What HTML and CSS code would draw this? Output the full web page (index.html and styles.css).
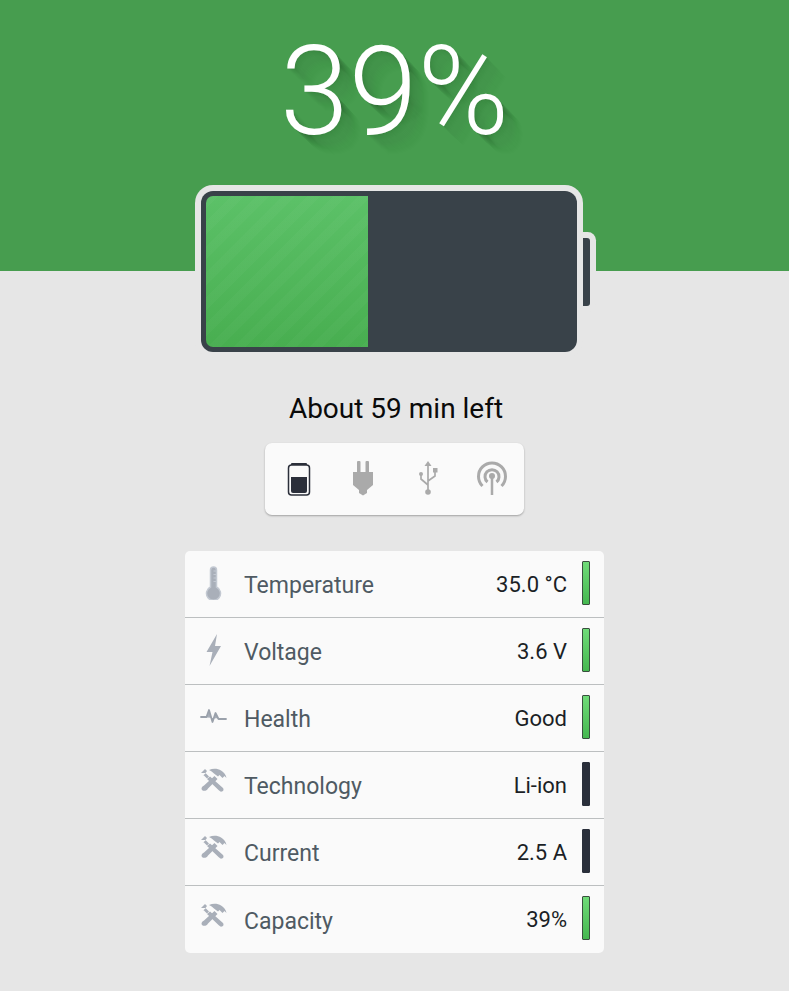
FILE: index.html
```html
<!DOCTYPE html>
<html lang="en">
<head>
  <meta charset="UTF-8" />
  <meta name="viewport" content="width=device-width, initial-scale=1.0" />
  <title>Battery</title>
  <link rel="stylesheet" href="styles.css">
</head>
<body>
  <svg class="defs" width="0" height="0">
    <symbol id="tools" viewBox="0 0 27 24">
      <path d="M1 5 L5 1 L7 3 L5.5 5 L9 8.5 L7 10.5 L3.5 7 L2.5 8 Z M1 5 L2.5 8 L6 5 Z" />
      <path d="M9 2 C13 0 18 0.500 21 2.500 C24 4 26 7 26.500 10 L24.500 8 L22.500 10 L19.500 7 L18 8.500 L14 5.500 C12.500 4 11 3 9 2 Z" />
      <path d="M14.500 8 L17.500 11 L8 20.500 C7 23 3.500 23.500 2 22 C1 21 1.500 18.500 4 17.500 Z" />
      <path d="M7 11 L10 8.500 L23 20 C24 21.500 23.500 23 22 23.500 C20.500 24 19.500 23 18.500 22 Z" />
    </symbol>
  </svg>

  <main class="page">
    <h1 class="percent">39%</h1>

    <div class="battery">
      <div class="battery-body">
        <div class="battery-fill"></div>
      </div>
      <div class="battery-nub"></div>
    </div>

    <p class="time-left">About 59 min left</p>

    <div class="sources">
      <svg class="source" viewBox="0 0 32 36">
        <rect x="8" y="2" width="16" height="3" rx="1" fill="#2b2f3a" />
        <rect x="5.500" y="4" width="21" height="30" rx="3" fill="#fafafa" stroke="#2b2f3a" stroke-width="1.500" />
        <path d="M8 16 H24 V30 a2 2 0 0 1 -2 2 H10 a2 2 0 0 1 -2 -2 Z" fill="#2b2f3a" />
      </svg>
      <svg class="source" viewBox="0 0 32 36" fill="#aaaaaa">
        <rect x="10" y="0" width="3.500" height="12" rx="1" />
        <rect x="18.500" y="0" width="3.500" height="12" rx="1" />
        <path d="M6 11 H26 V24 L20 29 V32 L16 34.500 L12 32 V29 L6 24 Z" />
      </svg>
      <svg class="source" viewBox="0 0 32 36" fill="none" stroke="#aaaaaa" stroke-width="1.700">
        <path d="M16 3 V31 M9 13 V18 L16 24 M23 9 V15 L16 20" />
        <path d="M16 0 L19.500 5 H12.500 Z" fill="#aaaaaa" stroke="none" />
        <circle cx="9" cy="13" r="2" fill="#aaaaaa" stroke="none" />
        <rect x="21" y="7" width="4.500" height="4.500" fill="#aaaaaa" stroke="none" />
        <circle cx="16" cy="31" r="2.800" fill="#aaaaaa" stroke="none" />
      </svg>
      <svg class="source" viewBox="0 0 32 36" fill="none" stroke="#aaaaaa" stroke-width="3">
        <path d="M6.500 25 A13.500 13.500 0 1 1 25.500 25" />
        <path d="M11.500 21 A7 7 0 1 1 20.500 21" />
        <path d="M16 15 V34" stroke-width="2.500" />
        <circle cx="16" cy="15" r="3" fill="#aaaaaa" stroke="none" />
      </svg>
    </div>

    <ul class="stats">
      <li class="stat">
        <svg class="stat-icon" viewBox="0 0 26 34" fill="none" stroke="#c3c9d2" stroke-width="1.500">
          <path d="M10 21 V4 a3 3 0 0 1 6 0 V21 a7 7 0 1 1 -6 0 Z" />
          <path d="M13 5 H16 M13 8.500 H16 M13 12 H16 M13 15.500 H16" stroke-width="1" />
        </svg>
        <span class="stat-label">Temperature</span>
        <span class="stat-value">35.0 °C</span>
        <span class="level ok"></span>
      </li>
      <li class="stat">
        <svg class="stat-icon" viewBox="0 0 26 34" fill="#b1b7c1">
          <path d="M16.500 1 L6 19 H12 L9 33 L20.500 13 H14.500 Z" />
        </svg>
        <span class="stat-label">Voltage</span>
        <span class="stat-value">3.6 V</span>
        <span class="level ok"></span>
      </li>
      <li class="stat">
        <svg class="stat-icon" viewBox="0 0 26 34" fill="none" stroke="#9aa1ab" stroke-width="1.800" stroke-linejoin="round" stroke-linecap="round">
          <path d="M0.500 17 H6 L8.500 10 L12 22 L15 13 L18 19 H25.500" />
        </svg>
        <span class="stat-label">Health</span>
        <span class="stat-value">Good</span>
        <span class="level ok"></span>
      </li>
      <li class="stat">
        <svg class="stat-icon tools-icon"><use href="#tools" /></svg>
        <span class="stat-label">Technology</span>
        <span class="stat-value">Li-ion</span>
        <span class="level off"></span>
      </li>
      <li class="stat">
        <svg class="stat-icon tools-icon"><use href="#tools" /></svg>
        <span class="stat-label">Current</span>
        <span class="stat-value">2.5 A</span>
        <span class="level off"></span>
      </li>
      <li class="stat">
        <svg class="stat-icon tools-icon"><use href="#tools" /></svg>
        <span class="stat-label">Capacity</span>
        <span class="stat-value">39%</span>
        <span class="level ok"></span>
      </li>
    </ul>
  </main>
</body>
</html>
```

FILE: styles.css
```css
* {
  box-sizing: border-box;
}
body {
  margin: 0;
  background-color: #e6e6e6;
  font-family: Roboto, sans-serif;
  color: #1b1f26;
}
.defs {
  display: block;
  height: 0;
}
.page {
  display: flex;
  flex-direction: column;
  align-items: center;
  height: 991px;
  padding-top: 19px;
  background: linear-gradient(#479d4f 271px, transparent 271px);
}
.percent {
  margin: 0;
  height: 146px;
  font-size: 124px;
  font-weight: 300;
  line-height: 146px;
  color: #fff;
  text-shadow:
    1px 1px 0 rgba(0, 0, 0, 0.03), 2px 2px 0 rgba(0, 0, 0, 0.03),
    3px 3px 0 rgba(0, 0, 0, 0.02), 4px 4px 0 rgba(0, 0, 0, 0.02),
    5px 5px 0 rgba(0, 0, 0, 0.015), 6px 6px 0 rgba(0, 0, 0, 0.015),
    7px 7px 0 rgba(0, 0, 0, 0.012), 8px 8px 0 rgba(0, 0, 0, 0.012),
    9px 9px 0 rgba(0, 0, 0, 0.01), 10px 10px 0 rgba(0, 0, 0, 0.01),
    11px 11px 0 rgba(0, 0, 0, 0.008), 12px 12px 0 rgba(0, 0, 0, 0.008),
    13px 13px 0 rgba(0, 0, 0, 0.006), 14px 14px 0 rgba(0, 0, 0, 0.006),
    15px 15px 0 rgba(0, 0, 0, 0.005), 16px 16px 0 rgba(0, 0, 0, 0.005),
    17px 17px 0 rgba(0, 0, 0, 0.004), 18px 18px 0 rgba(0, 0, 0, 0.004),
    19px 19px 0 rgba(0, 0, 0, 0.003), 20px 20px 0 rgba(0, 0, 0, 0.003);
}
.battery {
  display: flex;
  align-items: center;
  margin-top: 26px;
  margin-left: 2px;
}
.battery-body {
  position: relative;
  z-index: 1;
  width: 376px;
  height: 161px;
  padding: 5px;
  background-color: #394249;
  border-radius: 12px;
  box-shadow: 0 0 0 1px #e6e6e6, 0 0 0 6px #e6e6e6;
}
.battery-fill {
  width: 162px;
  height: 100%;
  border-radius: 7px 0 0 7px;
  background-color: #4cae52;
  background-image:
    repeating-linear-gradient(135deg, rgba(255, 255, 255, 0.025) 0 9px, transparent 9px 18px),
    linear-gradient(#5cc168, #48ae50);
}
.battery-nub {
  width: 13px;
  height: 68px;
  background-color: #394249;
  border-radius: 0 3px 3px 0;
  box-shadow: 0 0 0 6px #e6e6e6;
}
.time-left {
  margin: 38px 0 0 3px;
  font-size: 28px;
  line-height: 38px;
  color: #0a0a0a;
}
.sources {
  display: flex;
  justify-content: space-between;
  align-items: center;
  width: 259px;
  height: 72px;
  margin-top: 15px;
  padding: 0 16px 0 18px;
  background-color: #fafafa;
  border-radius: 7px;
  box-shadow: 0 1px 2px rgba(0, 0, 0, 0.3);
}
.source {
  width: 32px;
  height: 36px;
}
.stats {
  width: 419px;
  margin: 36px 0 0;
  padding: 0;
  list-style: none;
  background-color: #fafafa;
  border-radius: 5px;
}
.stat {
  display: flex;
  align-items: center;
  height: 67px;
  padding: 0 14px 0 15px;
  border-bottom: 1px solid #bcbfc0;
}
.stat:last-child {
  border-bottom: none;
}
.stat-icon {
  flex: none;
  width: 27px;
  height: 34px;
  margin-right: 17px;
  margin-top: -2px;
  fill: #a9afb9;
}
.tools-icon {
  height: 24px;
  margin-top: -10px;
}
.stat-label {
  flex: 1;
  margin-top: 3px;
  font-size: 23px;
  color: #4f5a63;
}
.stat-value {
  font-size: 22px;
  margin-top: 0;
  color: #1b1f26;
}
.level {
  flex: none;
  width: 8px;
  height: 44px;
  margin-left: 15px;
  margin-top: -3px;
  border: 1px solid #39503e;
  border-radius: 1px;
}
.level.ok {
  background: linear-gradient(#6fdb78, #45b850);
}
.level.off {
  background-color: #2a2f3b;
  border-color: #2a2f3b;
}
```
